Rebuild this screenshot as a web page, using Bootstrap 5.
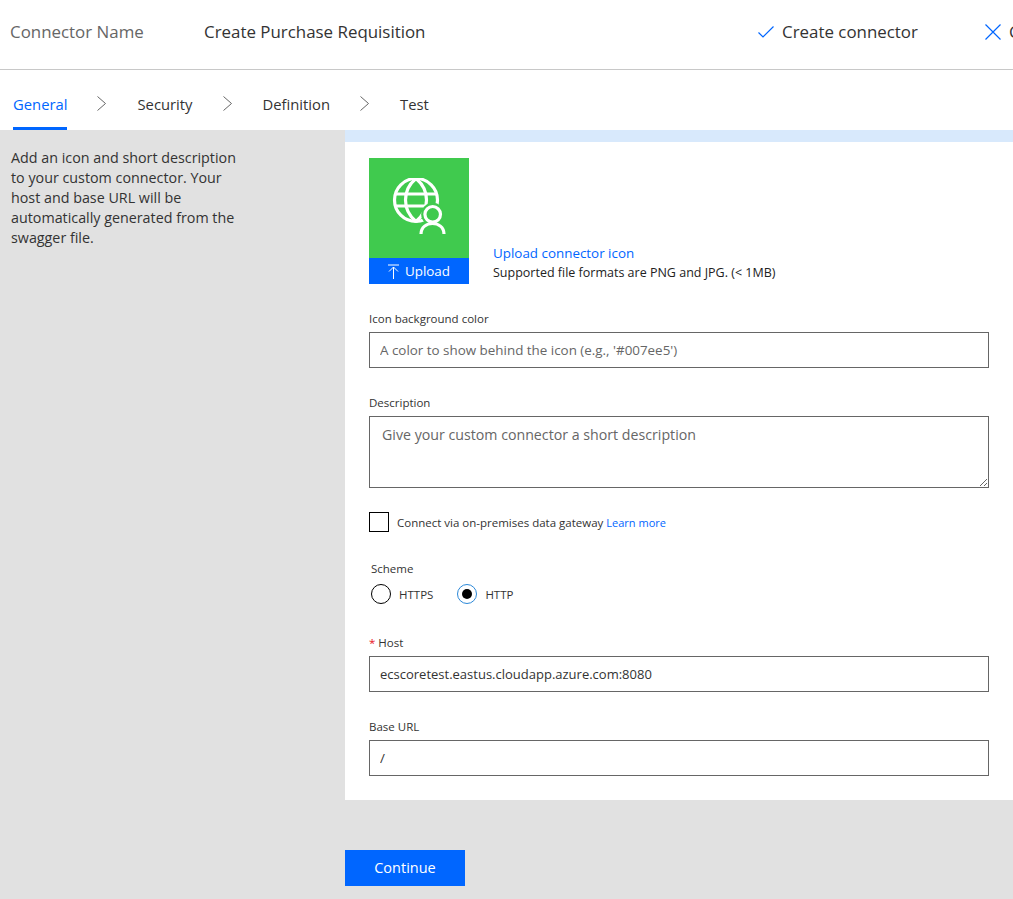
<!DOCTYPE html>
<html lang="en">
<head>
  <meta charset="UTF-8" />
  <meta name="viewport" content="width=device-width, initial-scale=1.0"/>
  <title>Create Purchase Requisition</title>
  <link href="https://cdn.jsdelivr.net/npm/bootstrap@5.3.0/dist/css/bootstrap.min.css" rel="stylesheet">
  <style>
    html, body { height: 100%; }
    body {
      font-family: "Open Sans", "Noto Sans", sans-serif;
      color: #333;
      background: #e1e1e1;
      overflow: hidden;
      width: 1013px;
      height: 899px;
    }
    .top-head {
      height: 70px;
      background: #fff;
      border-bottom: 1px solid #c8c8c8;
      white-space: nowrap;
      font-size: 16.9px;
      padding: 0 0 5px 10px;
    }
    .head-label { width: 194px; flex: none; color: #666; }
    .head-name { width: 554px; flex: none; }
    .head-action { width: 227px; flex: none; }
    .head-action svg { margin-right: 8px; }
    .step-bar { height: 60px; background: #fff; padding-left: 13px; font-size: 14.8px; }
    .step-item { height: 60px; line-height: 69px; color: #333; text-decoration: none; }
    .step-item.on { color: #0066ff; border-bottom: 3px solid #0066ff; }
    .step-arrow { margin: 24px 31px 0 30px; flex: none; }
    .side-pane { width: 345px; flex: none; padding: 18px 100px 0 11px; font-size: 14.3px; line-height: 20px; }
    .main-pane { width: 668px; }
    .info-strip { height: 12px; background: #d8e9fc; }
    .form-panel { background: #fff; height: 658px; padding: 16px 24px 0; }
    .icon-tile { width: 100px; height: 126px; background: #40ca4e; }
    .icon-upload { height: 26px; padding-top: 1px; background: #0066ff; color: #fff; font-size: 13.4px; }
    .icon-upload svg { margin-right: 6px; }
    .upload-link { color: #0066ff; text-decoration: none; font-size: 13.4px; margin-bottom: 1px; }
    .upload-hint { font-size: 12.5px; color: #222; padding-bottom: 1px; }
    .field-label { font-size: 11.5px; color: #333; line-height: 16px; margin: 27px 0 5px; }
    .field-box {
      height: 36px;
      border: 1px solid #666;
      border-radius: 0;
      font-size: 13.4px;
      padding: 0 10px;
      color: #333;
    }
    .host-value { font-size: 13px; }
    .field-box::placeholder { color: #666; opacity: 1; }
    textarea.field-box { height: 72px; padding: 7px 12px; font-size: 14.2px; resize: both; display: block; }
    .check-row { margin-top: 24px; }
    .check-box {
      width: 20px; height: 20px; border: 1px solid #000; background: #fff; flex: none;
    }
    .check-text { font-size: 11.5px; color: #333; padding-top: 1px; }
    .check-text a { color: #0066ff; text-decoration: none; font-size: 11px; }
    .scheme-label { margin: 29px 0 7px 2px; }
    .scheme-row { margin-left: 2px; }
    .radio-dot {
      width: 20px; height: 20px; border: 1px solid #000; border-radius: 50%; flex: none;
      display: flex; align-items: center; justify-content: center;
    }
    .radio-dot.on { border: 1.5px solid #2b88d8; }
    .radio-dot.on::after { content: ""; width: 10px; height: 10px; border-radius: 50%; background: #000; }
    .radio-text { font-size: 11.5px; color: #333; padding-top: 1px; }
    .host-label { margin-top: 31px; }
    .req-mark { color: #e81123; }
    .go-btn {
      width: 120px; height: 36px; background: #0066ff; color: #fff; border: 0; border-radius: 0;
      font-size: 14.5px; padding: 0; margin-top: 50px;
    }
    .go-btn:hover { background: #0066ff; color: #fff; }
  </style>
</head>
<body>

<header class="top-head d-flex align-items-center">
  <div class="head-label">Connector Name</div>
  <div class="head-name">Create Purchase Requisition</div>
  <div class="head-action d-flex align-items-center">
    <svg width="16" height="14" viewBox="0 0 16 14" fill="none" stroke="#0066ff" stroke-width="1.200"><path d="M.5 7.500l4.500 4.500L15.500 1.500"/></svg>
    <span>Create connector</span>
  </div>
  <div class="d-flex align-items-center flex-shrink-0">
    <svg width="16" height="16" viewBox="0 0 16 16" fill="none" stroke="#0066ff" stroke-width="1.200" class="me-2"><path d="M.5.500l15 15M15.500.500l-15 15"/></svg>
    <span>Close</span>
  </div>
</header>

<nav class="step-bar d-flex">
  <a class="step-item on" href="#">General</a>
  <svg class="step-arrow" width="9" height="20" viewBox="0 0 9 20" fill="none" stroke="#666"><path d="M.5 2.500l8 7-8 7"/></svg>
  <a class="step-item" href="#">Security</a>
  <svg class="step-arrow" width="9" height="20" viewBox="0 0 9 20" fill="none" stroke="#666"><path d="M.5 2.500l8 7-8 7"/></svg>
  <a class="step-item" href="#">Definition</a>
  <svg class="step-arrow" width="9" height="20" viewBox="0 0 9 20" fill="none" stroke="#666"><path d="M.5 2.500l8 7-8 7"/></svg>
  <a class="step-item" href="#">Test</a>
</nav>

<div class="d-flex">
  <aside class="side-pane">Add an icon and short description to your custom connector. Your host and base URL will be automatically generated from the swagger file.</aside>

  <main class="main-pane">
    <div class="info-strip"></div>
    <div class="form-panel">
      <div class="d-flex align-items-end gap-4">
        <div class="icon-tile d-flex flex-column">
          <div class="flex-grow-1 d-flex align-items-center justify-content-center">
            <svg width="56" height="60" viewBox="0 0 56 60" fill="none" stroke="#fff" stroke-width="3.200">
              <circle cx="25" cy="22" r="21.500"/>
              <path d="M25 .5C11 12 11 32 25 43.500M25 .5C39 12 39 32 25 43.500"/>
              <path d="M5 16h40M5 28h40"/>
              <circle cx="41.700" cy="36.300" r="11.500" fill="#40ca4e" stroke="none"/>
              <circle cx="41.700" cy="36.300" r="7.800"/>
              <path d="M30 56C30 42 53 42 53 56"/>
            </svg>
          </div>
          <div class="icon-upload d-flex align-items-center justify-content-center">
            <svg width="11" height="15" viewBox="0 0 11 15" fill="none" stroke="#fff"><path d="M0 1h11M5.500 15V3M1 7.500L5.500 3 10 7.500"/></svg>
            Upload
          </div>
        </div>
        <div>
          <a class="upload-link d-block" href="#">Upload connector icon</a>
          <div class="upload-hint">Supported file formats are PNG and JPG. (&lt; 1MB)</div>
        </div>
      </div>

      <div class="field-label">Icon background color</div>
      <input class="form-control field-box" placeholder="A color to show behind the icon (e.g., '#007ee5')">

      <div class="field-label">Description</div>
      <textarea class="form-control field-box" placeholder="Give your custom connector a short description"></textarea>

      <div class="check-row d-flex align-items-center gap-2">
        <span class="check-box"></span>
        <span class="check-text">Connect via on-premises data gateway <a href="#">Learn more</a></span>
      </div>

      <div class="field-label scheme-label">Scheme</div>
      <div class="scheme-row d-flex align-items-center">
        <span class="radio-dot me-2"></span><span class="radio-text me-4">HTTPS</span>
        <span class="radio-dot on me-2"></span><span class="radio-text">HTTP</span>
      </div>

      <div class="field-label host-label"><span class="req-mark">*</span> Host</div>
      <input class="form-control field-box host-value" value="ecscoretest.eastus.cloudapp.azure.com:8080">

      <div class="field-label">Base URL</div>
      <input class="form-control field-box" value="/">
    </div>
    <button class="btn go-btn d-block" type="button">Continue</button>
  </main>
</div>

<script src="https://cdn.jsdelivr.net/npm/bootstrap@5.3.0/dist/js/bootstrap.bundle.min.js"></script>
</body>
</html>
